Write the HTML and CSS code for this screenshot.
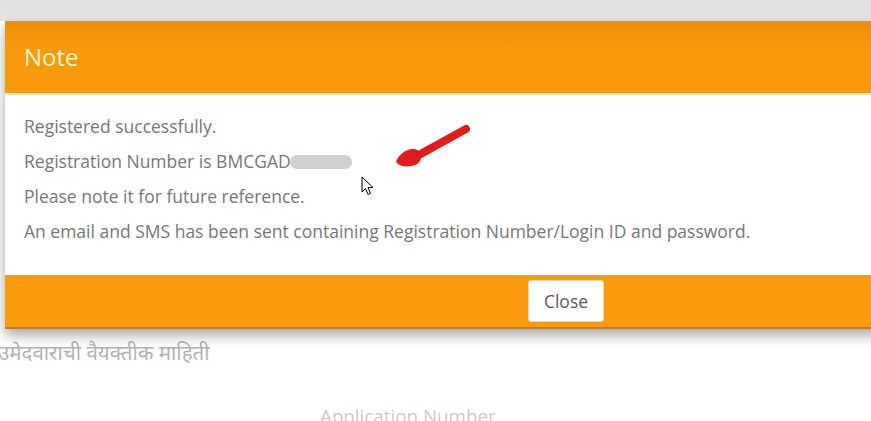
FILE: index.html
```html
<!DOCTYPE html>
<html>
<head>
<meta charset="utf-8">
<link rel="stylesheet" href="styles.css">
</head>
<body>
<div class="topbar"></div>
<div class="page">
  <div class="section-title">उमेदवाराची वैयक्तीक माहिती</div>
  <div class="field-label">Application Number</div>
</div>

<div class="modal">
  <div class="modal-header">Note</div>
  <div class="modal-body">
    <p>Registered successfully.</p>
    <p>Registration Number is BMCGAD<span class="redact"></span></p>
    <p>Please note it for future reference.</p>
    <p>An email and SMS has been sent containing Registration Number/Login ID and password.</p>
  </div>
  <div class="modal-footer">
    <button class="btn-close">Close</button>
  </div>
</div>

<svg class="arrow" width="80" height="50" viewBox="0 0 80 50">
  <path d="M73 8 L24 35" stroke="#e31b1b" stroke-width="8" stroke-linecap="round" fill="none"/>
  <path d="M3 41 C5 34 13 28 20 28 C27 28 30 34 27 40 C24 46 8 48 3 41 Z" fill="#e31b1b"/>
</svg>

<svg class="cursor" width="14" height="21" viewBox="0 0 14 21">
  <path d="M1 1 L1 16 L4.5 12.5 L7 18.5 L9.5 17.5 L7 11.5 L12 11.5 Z" fill="#fff" stroke="#000" stroke-width="1" stroke-linejoin="round"/>
</svg>
</body>
</html>
```

FILE: styles.css
```css
html, body {
  margin: 0;
  padding: 0;
  width: 871px;
  height: 421px;
  overflow: hidden;
  background: #ffffff;
  font-family: "Open Sans", "Noto Sans", sans-serif;
}

.topbar {
  height: 21px;
  background: linear-gradient(#e0e0e0, #e6e6e4);
}

.page {
  display: flex;
  flex-direction: column;
  padding-top: 317px;
}

.section-title {
  margin-left: -2px;
  font-family: "Noto Sans", "Open Sans", sans-serif;
  font-size: 20.5px;
  line-height: 28px;
  color: #b2b2b2;
}

.field-label {
  margin-top: 38px;
  margin-left: 320px;
  font-size: 18.8px;
  line-height: 24px;
  color: #cccccc;
}

.modal {
  position: absolute;
  left: 5px;
  top: 21px;
  width: 1000px;
  background: #fff;
  box-shadow: 0 6px 12px rgba(0, 0, 0, 0.35);
}

.modal-header {
  height: 74px;
  box-sizing: border-box;
  border-top: 1px solid #c89a58;
  border-bottom: 2px solid #fde8a8;
  background: linear-gradient(#ef8f08, #f99a0b 40%, #f99a0b);
  color: #fff6d6;
  font-size: 24px;
  line-height: 70px;
  padding-left: 19px;
}

.modal-body {
  height: 180px;
  box-sizing: border-box;
  padding: 19px 19px 0;
  color: #777777;
  font-size: 17.5px;
}

.modal-body p {
  margin: 0 0 11px;
  line-height: 24px;
}

.redact {
  display: inline-block;
  width: 62px;
  height: 14px;
  margin-left: -1px;
  vertical-align: -1px;
  border-radius: 7px;
  background: #cfd0d2;
}

.modal-footer {
  height: 54px;
  box-sizing: border-box;
  border-top: 1px solid #cfa46a;
  border-bottom: 2px solid #c77d1a;
  background: #fa9b0c;
  display: flex;
  align-items: center;
  padding-left: 523px;
  padding-bottom: 1px;
}

.btn-close {
  width: 76px;
  height: 42px;
  border: 1px solid #f0d6a8;
  border-radius: 3px;
  background: #fff;
  color: #5a5a5a;
  font-family: "Open Sans", sans-serif;
  font-size: 17.5px;
  padding: 0;
}

.arrow {
  position: absolute;
  left: 393px;
  top: 121px;
}

.cursor {
  position: absolute;
  left: 361px;
  top: 176px;
}
```
